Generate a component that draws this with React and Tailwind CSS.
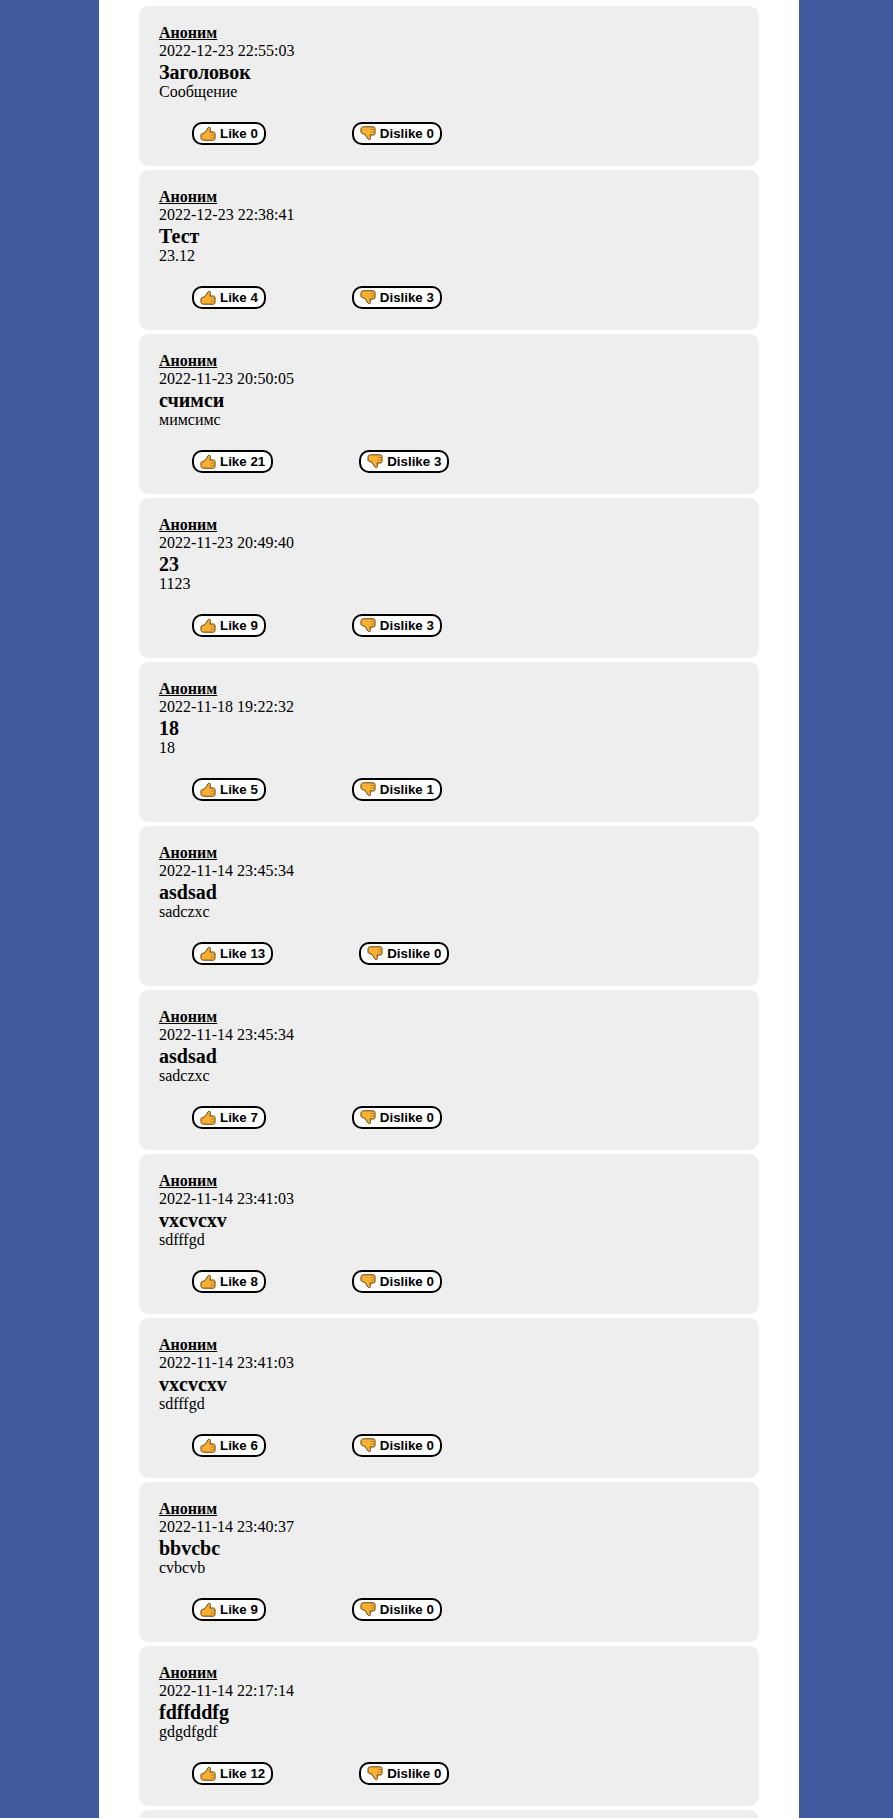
import React from "react";

const posts = [
  { date: "2022-12-23 22:55:03", title: "Заголовок", text: "Сообщение", likes: 0, dislikes: 0 },
  { date: "2022-12-23 22:38:41", title: "Тест", text: "23.12", likes: 4, dislikes: 3 },
  { date: "2022-11-23 20:50:05", title: "счимси", text: "мимсимс", likes: 21, dislikes: 3 },
  { date: "2022-11-23 20:49:40", title: "23", text: "1123", likes: 9, dislikes: 3 },
  { date: "2022-11-18 19:22:32", title: "18", text: "18", likes: 5, dislikes: 1 },
  { date: "2022-11-14 23:45:34", title: "asdsad", text: "sadczxc", likes: 13, dislikes: 0 },
  { date: "2022-11-14 23:45:34", title: "asdsad", text: "sadczxc", likes: 7, dislikes: 0 },
  { date: "2022-11-14 23:41:03", title: "vxcvcxv", text: "sdfffgd", likes: 8, dislikes: 0 },
  { date: "2022-11-14 23:41:03", title: "vxcvcxv", text: "sdfffgd", likes: 6, dislikes: 0 },
  { date: "2022-11-14 23:40:37", title: "bbvcbc", text: "cvbcvb", likes: 9, dislikes: 0 },
  { date: "2022-11-14 22:17:14", title: "fdffddfg", text: "gdgdfgdf", likes: 12, dislikes: 0 },
];

function Thumb({ down = false }) {
  return (
    <svg width="16" height="15" viewBox="0 0 16 15" className={down ? "-scale-y-100" : ""}>
      <path
        d="M1.5 8 5 6.5 8 2c.4-1 2.300-.9 2.500.4L10 6h3.500c1.300 0 1.600 1 1.500 2v4.500c0 1-.7 1.700-1.700 1.700H3.500C2 14.200 1 13.200 1 11.800V9c0-.4.100-.8.500-1z"
        fill="#fbb034"
        stroke="#5f4312"
        strokeWidth="1"
        strokeLinejoin="round"
      />
      <path d="M10.500 9h4.500M10.500 11.500h4.500" fill="none" stroke="#b97c1c" strokeWidth="0.8" />
    </svg>
  );
}

function VoteButton({ down, label, count, className }) {
  return (
    <button className={`inline-flex h-[23px] items-center gap-[4px] rounded-[10px] border-2 border-black bg-white px-[6px] font-['Liberation_Sans',sans-serif] text-[13.33px] font-bold text-black ${className}`}>
      <Thumb down={down} />
      <span className="pt-[1px]">
        {label} {count}
      </span>
    </button>
  );
}

function Post({ post }) {
  return (
    <div className="mb-1 h-[160px] rounded-[10px] bg-[#eeeeee] pl-5 pt-[18px]">
      <a className="block w-fit text-[16px] leading-[18px] font-bold underline">Аноним</a>
      <div className="text-[16px] leading-[18px]">{post.date}</div>
      <div className="mt-[1px] text-[20px] leading-[22px] font-bold">{post.title}</div>
      <div className="text-[16px] leading-[18px]">{post.text}</div>
      <div className="mt-[21px] flex">
        <VoteButton label="Like" count={post.likes} className="ml-[33px]" />
        <VoteButton down label="Dislike" count={post.dislikes} className="ml-[86px]" />
      </div>
    </div>
  );
}

export default function App() {
  return (
    <div className="h-[1818px] overflow-hidden bg-[#3f5a9e] font-['Liberation_Serif',serif] text-black">
      <div className="ml-[99px] h-full w-[700px] bg-white px-10 pt-[6px]">
        {posts.map((post, i) => (
          <Post key={i} post={post} />
        ))}
        <div className="h-[160px] rounded-[10px] bg-[#eeeeee]" />
      </div>
    </div>
  );
}
